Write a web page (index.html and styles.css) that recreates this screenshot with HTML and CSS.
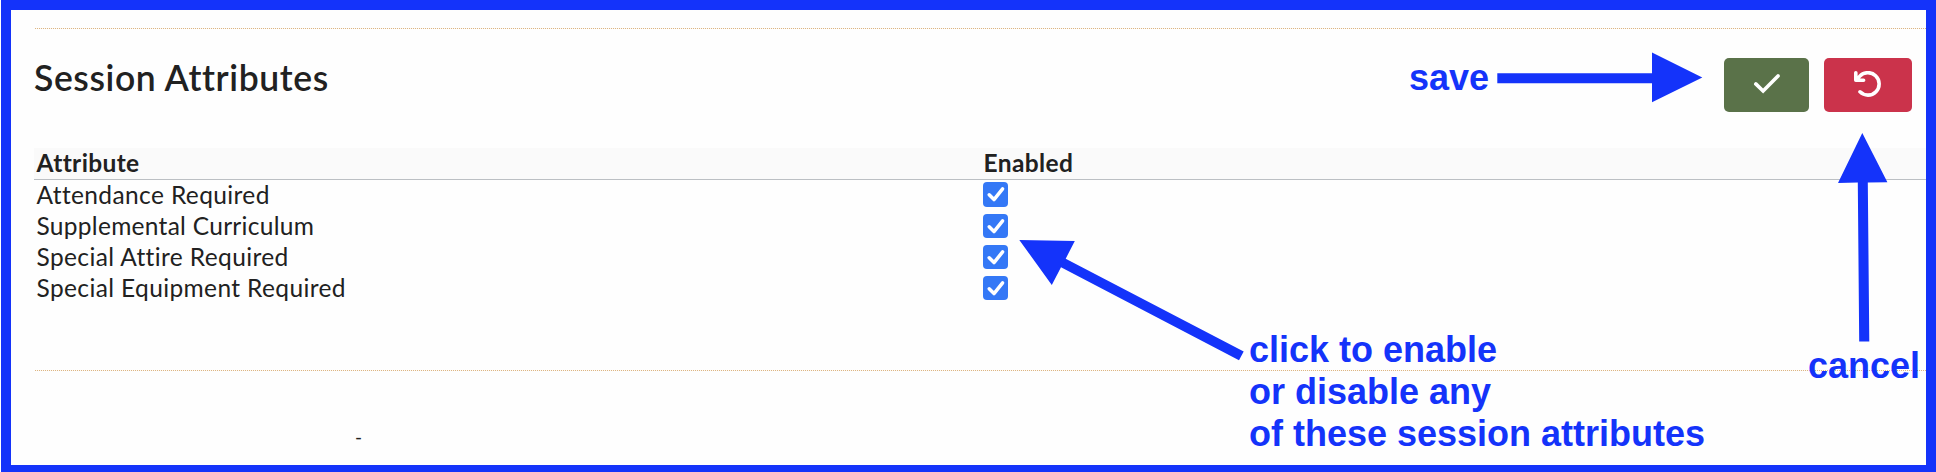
FILE: index.html
```html
<!DOCTYPE html>
<html lang="en">
<head>
<meta charset="utf-8">
<title>Session Attributes</title>
<link rel="stylesheet" href="styles.css">
</head>
<body>
<svg class="defs" aria-hidden="true">
  <symbol id="tick" viewBox="0 0 25 24"><path d="M6.2 12.8L11 17.6L19.6 6.9" fill="none" stroke="#fff" stroke-width="3.5" stroke-linecap="round" stroke-linejoin="round"/></symbol>
</svg>
<div class="frame">
  <section class="panel">
    <header class="panel-header">
      <h1 class="title">Session Attributes</h1>
      <div class="actions">
        <button class="btn btn-save" aria-label="Save"><svg class="btn-icon" viewBox="0 0 28 28"><path d="M2.8 12.9L10.1 20L25 4.9" fill="none" stroke="#fff" stroke-width="3.6" stroke-linecap="round"/></svg></button>
        <button class="btn btn-cancel" aria-label="Cancel"><svg class="btn-icon" viewBox="0 0 28 28"><path d="M1.8 1.8V9.3H9.6M2.6 8.7L5.6 5.4A11.2 11.2 0 1 1 6 20.8" fill="none" stroke="#fff" stroke-width="3.6" stroke-linecap="round" stroke-linejoin="round"/></svg></button>
      </div>
    </header>
    <div class="table">
      <div class="row head"><span class="cell">Attribute</span><span class="cell enabled">Enabled</span></div>
      <div class="row"><span class="cell">Attendance Required</span><span class="check check-first"><svg><use href="#tick"/></svg></span></div>
      <div class="row"><span class="cell curriculum">Supplemental Curriculum</span><span class="check"><svg><use href="#tick"/></svg></span></div>
      <div class="row"><span class="cell">Special Attire Required</span><span class="check"><svg><use href="#tick"/></svg></span></div>
      <div class="row"><span class="cell">Special Equipment Required</span><span class="check"><svg><use href="#tick"/></svg></span></div>
    </div>
  </section>
  <footer class="footer">-</footer>
</div>
<svg class="arrows" viewBox="0 0 1936 472">
  <path d="M1497.3 73.2H1652V52.5L1702.3 77.6L1652 102.3V83.2H1497.3Z"/>
  <path d="M1862.3 133L1887.4 182.2L1867.8 182.5L1869.3 341.6H1859.2L1857.8 182.6L1838 183Z"/>
  <path d="M1019.3 239.9L1074.8 241L1065.7 258.7L1243.7 351.6L1239 360.2L1061 267.2L1051.8 285Z"/>
</svg>
<div class="note note-save">save</div>
<div class="note note-cancel">cancel</div>
<div class="note note-click">click to enable<br>or disable any<br>of these session attributes</div>
</body>
</html>
```
FILE: styles.css
```css
* { box-sizing: border-box; }
body { margin: 0; width: 1936px; height: 472px; position: relative; overflow: hidden; background: #fff; color: #212121; font-family: Lato, "Open Sans", sans-serif; font-variant-ligatures: none; }
.defs { position: absolute; width: 0; height: 0; }
.frame { margin-left: 1px; height: 472px; border: 10px solid #1433fa; border-bottom-width: 7px; padding: 18px 0 0 23px; background: #fefefe; }
.panel { height: 343px; background: repeating-linear-gradient(90deg, #dcb583 0 1px, #fdf9f4 1px 2px) 1px 0 / 100% 1px no-repeat, repeating-linear-gradient(90deg, #dcb583 0 1px, #fdf9f4 1px 2px) 1px 100% / 100% 1px no-repeat; }
.panel-header { display: flex; justify-content: space-between; height: 120px; padding: 30px 14px 0 0; }
.title { margin: -8px 0 0 0; font-size: 35.5px; line-height: 56px; font-weight: 600; letter-spacing: .6px; white-space: nowrap; }
.actions { display: flex; gap: 15px; }
.btn { display: flex; align-items: center; justify-content: center; height: 54px; padding: 0; border: 0; border-radius: 5px; }
.btn-save { width: 85px; background: #5a7249; }
.btn-cancel { width: 88px; background: #cb334b; }
.btn-icon { width: 28px; height: 28px; }
.row { display: grid; grid-template-columns: 949px 1fr; height: 31px; font-size: 24.5px; line-height: 29px; letter-spacing: .38px; }
.row.head { height: 32px; background: #fafafa; border-bottom: 1px solid #bbbfc3; font-weight: 700; }
.cell { padding-left: 2.5px; white-space: nowrap; }
.curriculum { letter-spacing: .29px; }
.head .enabled { padding-left: .5px; }
.check { width: 25px; height: 24px; margin-top: 3px; border-radius: 4px; background: #3478f6; display: flex; }
.check svg { width: 25px; height: 24px; }
.check-first { height: 25px; margin-top: 2px; }
.footer { padding: 50px 0 0 321px; font-size: 19px; line-height: 32px; }
.arrows { position: absolute; inset: 0; width: 1936px; height: 472px; fill: #1433fa; }
.note { position: absolute; font: 700 36px/42.3px "Liberation Sans", sans-serif; color: #1433fa; white-space: nowrap; }
.note-save { left: 1409px; top: 57px; }
.note-cancel { left: 1808px; top: 345px; }
.note-click { left: 1249px; top: 328.6px; }
```
